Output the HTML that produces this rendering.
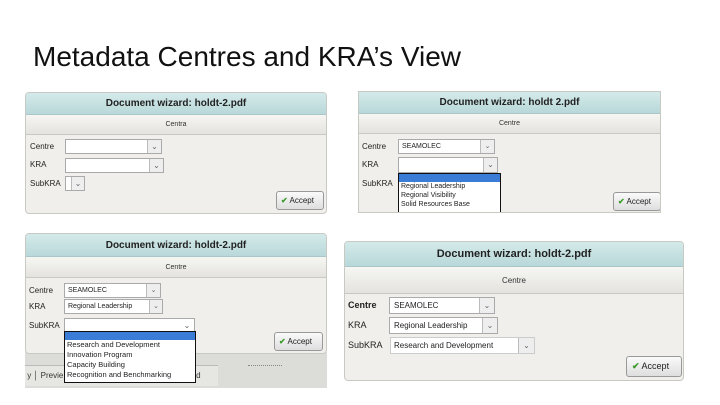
<!DOCTYPE html>
<html><head><meta charset="utf-8"><style>
*{box-sizing:border-box;margin:0;padding:0}
body{width:720px;height:405px;background:#fff;position:relative;overflow:hidden;font-family:"Liberation Sans",sans-serif;color:#222}
.a{position:absolute}
h1{position:absolute;left:33px;top:41px;font-weight:normal;font-size:28px;color:#111;white-space:nowrap}
.panel{position:absolute;background:#f0efeb;border:1px solid #c9c9c4;border-radius:4px;overflow:hidden}
.title{position:absolute;left:0;right:0;top:0;background:linear-gradient(#d4eaea,#b9d8d9);border-bottom:1px solid #a9c7c8;text-align:center;font-weight:bold;color:#222}
.sub{position:absolute;left:0;right:0;background:linear-gradient(#f6f6f3,#e4e3de);border-bottom:1px solid #c9c8c2;text-align:center;color:#333}
.lab{position:absolute;color:#222;white-space:nowrap}
.sel{position:absolute;background:#fff;border:1px solid #aaa;white-space:nowrap;overflow:hidden;color:#222}
.sel .ar{position:absolute;right:0;top:0;bottom:0;border-left:1px solid #bbb;background:#eee;color:#666;text-align:center}
.dd{position:absolute;background:#fff;border:1px solid #111;white-space:nowrap;color:#222}
.dd .hl{background:#3b7cd6}
.btn{position:absolute;border:1px solid #999;border-radius:3px;background:linear-gradient(#fafafa,#dedede);color:#222;white-space:nowrap}
.btn b{color:#3a9a2a;font-weight:bold}
</style></head><body>
<h1>Metadata Centres and KRA’s View</h1>

<!-- Panel 1 -->
<div class="panel" style="left:25px;top:92px;width:302px;height:122px;font-size:8px">
 <div class="title" style="height:22px;line-height:22px;font-size:10px">Document wizard: holdt-2.pdf</div>
 <div class="sub" style="top:22px;height:20px;line-height:20px;font-size:7px">Centra</div>
 <div class="lab" style="left:4px;top:49px">Centre</div>
 <div class="sel" style="left:39px;top:46px;width:97px;height:15px"><span class="ar" style="width:14px;line-height:13px">⌄</span></div>
 <div class="lab" style="left:4px;top:67px">KRA</div>
 <div class="sel" style="left:39px;top:65px;width:99px;height:15px"><span class="ar" style="width:14px;line-height:13px">⌄</span></div>
 <div class="lab" style="left:4px;top:86px">SubKRA</div>
 <div class="sel" style="left:39px;top:83px;width:20px;height:15px"><span class="ar" style="width:13px;line-height:13px">⌄</span></div>
 <div class="btn" style="left:250px;top:98px;width:48px;height:19px;line-height:17px;padding-left:4px"><b>✔</b> Accept</div>
</div>

<!-- Panel 2 -->
<div class="panel" style="left:358px;top:91px;width:303px;height:122px;font-size:8px;border-radius:0">
 <div class="title" style="height:22px;line-height:22px;font-size:10px">Document wizard: holdt 2.pdf</div>
 <div class="sub" style="top:22px;height:20px;line-height:20px;font-size:7px">Centre</div>
 <div class="lab" style="left:3px;top:50px">Centre</div>
 <div class="sel" style="left:39px;top:47px;width:97px;height:15px;padding-left:3px;line-height:13px;font-size:7px">SEAMOLEC<span class="ar" style="width:14px">⌄</span></div>
 <div class="lab" style="left:3px;top:68px">KRA</div>
 <div class="sel" style="left:39px;top:65px;width:100px;height:16px"><span class="ar" style="width:14px;line-height:14px">⌄</span></div>
 <div class="lab" style="left:3px;top:87px">SubKRA</div>
 <div class="dd" style="left:39px;top:81px;width:103px;height:42px;font-size:7px;line-height:9px;padding-left:2px;border-bottom:0"><div class="hl" style="height:8px;margin-left:-2px"></div>Regional Leadership<br>Regional Visibility<br>Solid Resources Base</div>
 <div class="btn" style="left:254px;top:100px;width:48px;height:19px;line-height:17px;padding-left:4px"><b>✔</b> Accept</div>
</div>

<!-- Panel 3 background strip -->
<div class="a" style="left:25px;top:352px;width:302px;height:36px;background:#dcdcd8"></div>
<div class="a" style="left:25px;top:365px;width:193px;height:21px;background:#e6e6e2;border-top:1px solid #bbb;font-size:8px;line-height:20px;color:#333">&nbsp;y&nbsp;│ Previe<span style="position:absolute;left:156px">acted</span></div>
<div class="a" style="left:248px;top:365px;width:34px;height:2px;border-top:1px dotted #888"></div>
<div class="panel" style="left:25px;top:233px;width:302px;height:121px;font-size:8px">
 <div class="title" style="height:23px;line-height:23px;font-size:10px">Document wizard: holdt-2.pdf</div>
 <div class="sub" style="top:23px;height:21px;line-height:21px;font-size:7px">Centre</div>
 <div class="lab" style="left:3px;top:52px">Centre</div>
 <div class="sel" style="left:38px;top:49px;width:97px;height:15px;padding-left:3px;line-height:13px;font-size:7px">SEAMOLEC<span class="ar" style="width:14px">⌄</span></div>
 <div class="lab" style="left:3px;top:68px">KRA</div>
 <div class="sel" style="left:38px;top:65px;width:99px;height:15px;padding-left:3px;line-height:13px;font-size:7px">Regional Leadership<span class="ar" style="width:13px">⌄</span></div>
 <div class="lab" style="left:3px;top:87px">SubKRA</div>
 <div class="sel" style="left:38px;top:84px;width:131px;height:15px"><span class="ar" style="width:14px;line-height:13px;background:#fff;border:0">⌄</span></div>
 <div class="btn" style="left:248px;top:98px;width:49px;height:19px;line-height:17px;padding-left:4px"><b>✔</b> Accept</div>
</div>
<div class="dd" style="left:64px;top:331px;width:132px;height:52px;font-size:7.5px;line-height:10px;padding-left:2px"><div class="hl" style="height:8px;margin-left:-2px"></div>Research and Development<br>Innovation Program<br>Capacity Building<br>Recognition and Benchmarking</div>

<!-- Panel 4 -->
<div class="panel" style="left:344px;top:241px;width:340px;height:140px;font-size:9px">
 <div class="title" style="height:25px;line-height:25px;font-size:11px">Document wizard: holdt-2.pdf</div>
 <div class="sub" style="top:25px;height:27px;line-height:27px;font-size:8px">Centre</div>
 <div class="lab" style="left:3px;top:58px;font-weight:bold">Centre</div>
 <div class="sel" style="left:44px;top:55px;width:106px;height:17px;padding-left:4px;line-height:15px;font-size:8px">SEAMOLEC<span class="ar" style="width:15px">⌄</span></div>
 <div class="lab" style="left:3px;top:78px">KRA</div>
 <div class="sel" style="left:44px;top:75px;width:109px;height:17px;padding-left:4px;line-height:15px;font-size:8px">Regional Leadership<span class="ar" style="width:15px">⌄</span></div>
 <div class="lab" style="left:3px;top:98px">SubKRA</div>
 <div class="sel" style="left:45px;top:95px;width:145px;height:17px;padding-left:3px;line-height:15px;font-size:8px;border-color:#ccc">Research and Development<span class="ar" style="width:16px">⌄</span></div>
 <div class="btn" style="left:281px;top:114px;width:56px;height:21px;line-height:19px;padding-left:5px;font-size:9px"><b>✔</b> Accept</div>
</div>
</body></html>
